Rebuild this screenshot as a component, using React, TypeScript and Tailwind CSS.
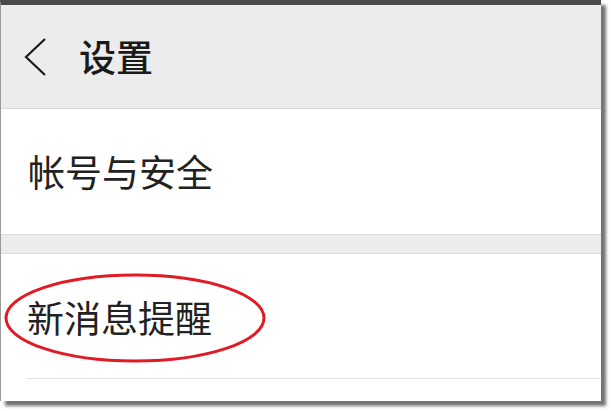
import React from "react";

const font = { fontFamily: '"Noto Sans CJK SC", "Noto Sans", sans-serif' };

export default function App() {
  return (
    <div className="w-[611px] h-[411px] bg-white overflow-hidden" style={font}>
      <div className="relative w-[601px] h-[401px] bg-white border-l border-l-[#9a9a9a] border-t-[5px] border-t-[#4a4a4a] shadow-[5px_5px_3px_rgba(0,0,0,0.55)] flex flex-col">
        {/* header */}
        <div className="h-[104px] bg-[#ececec] border-b border-[#d6d6d6] flex items-center pl-[22px]">
          <svg width="24" height="40" viewBox="0 0 24 40" className="shrink-0">
            <path d="M22 2 L3 20 L22 38" fill="none" stroke="#1a1a1a" strokeWidth="2.2" />
          </svg>
          <span className="ml-[32px] text-[37px] font-medium text-[#1a1a1a] leading-none">设置</span>
        </div>

        {/* account row */}
        <div className="h-[126px] border-b border-[#dcdcdc] flex items-center pl-[27px]">
          <span className="text-[37px] text-[#222] leading-none">帐号与安全</span>
        </div>

        {/* group gap */}
        <div className="h-[19px] bg-[#ececec] border-b border-[#dcdcdc]" />

        {/* notifications row */}
        <div className="h-[124px] flex items-center pl-[26px] pt-[2px]">
          <span className="text-[37px] text-[#222] leading-none">新消息提醒</span>
        </div>
        <div className="ml-[25px] border-t border-[#e2e2e2]" />

        {/* red annotation ellipse */}
        <svg className="absolute left-0 top-0 pointer-events-none" width="601" height="401">
          <ellipse cx="134" cy="313" rx="129" ry="43" fill="none" stroke="#e01b24" strokeWidth="3" />
        </svg>
      </div>
    </div>
  );
}
